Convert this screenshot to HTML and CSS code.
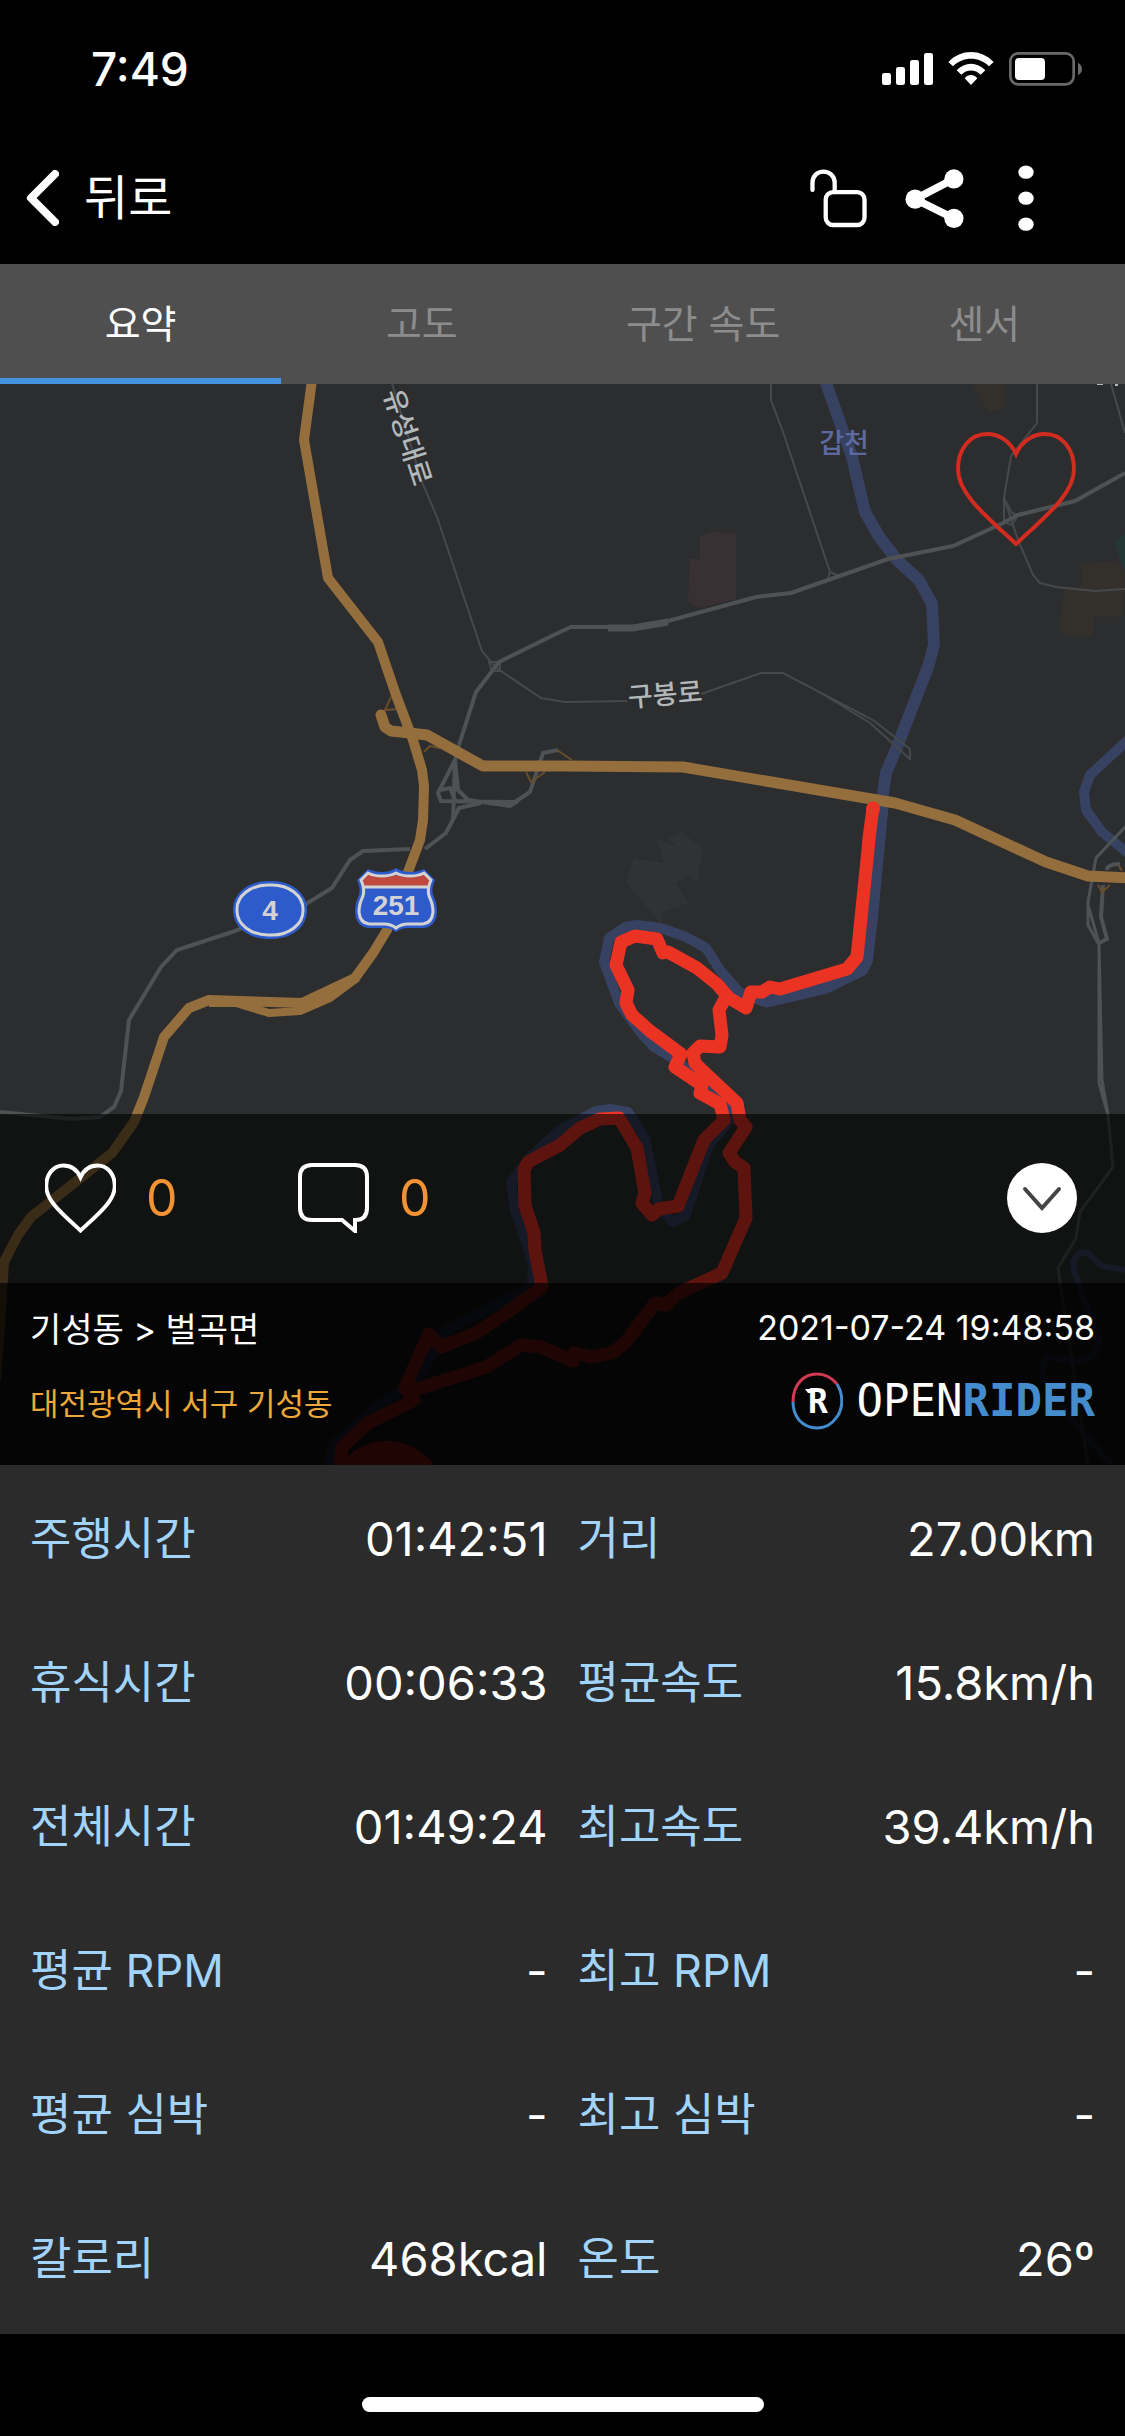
FILE: index.html
```html
<!DOCTYPE html>
<html lang="ko">
<head>
<meta charset="utf-8">
<meta name="viewport" content="width=device-width, initial-scale=1">
<title>OPENRIDER</title>
<link rel="stylesheet" href="styles.css">
</head>
<body>
<svg class="defs" width="0" height="0" aria-hidden="true">
  <symbol id="heart" viewBox="0 0 120 114">
    <path d="M60 22C54 9 43 2 31 2C14 2 2 17 2 37C2 62 30 84 60 112C90 84 118 62 118 37C118 17 106 2 89 2C77 2 66 9 60 22Z" fill="none" stroke="currentColor" vector-effect="non-scaling-stroke"/>
  </symbol>
</svg>

<div class="status">
  <span class="clock">7:49</span>
  <svg class="status-icons" viewBox="291 36 600 102" aria-label="신호, Wi-Fi, 배터리">
    <g fill="#fff">
      <rect x="291" y="99" width="27" height="36" rx="7"/>
      <rect x="333" y="81" width="27" height="54" rx="7"/>
      <rect x="375" y="60" width="27" height="75" rx="7"/>
      <rect x="417" y="39" width="27" height="96" rx="7"/>
      <path d="M490 66C528 26 588 26 626 66L612 79C582 49 534 49 504 79Z"/>
      <path d="M515 91C539 65 577 65 601 91L587 104C571 87 545 87 529 104Z"/>
      <path d="M539 115C550 102 566 102 577 115L558 135Z"/>
      <rect x="690" y="54" width="90" height="66" rx="12"/>
    </g>
    <rect x="676" y="40" width="190" height="93" rx="24" fill="none" stroke="#6a6a6a" stroke-width="8"/>
    <path d="M879 68Q891 75 891 87Q891 99 879 106Z" fill="#6a6a6a"/>
  </svg>
</div>

<header class="nav">
  <button class="back" type="button">
    <svg class="back-icon" viewBox="0 0 33 56"><path d="M29 4L5 28L29 52" fill="none" stroke="#fff" stroke-width="8" stroke-linecap="round" stroke-linejoin="round"/></svg>
    <span>뒤로</span>
  </button>
  <div class="nav-tools">
    <button type="button" aria-label="공개 설정">
      <svg class="lock" viewBox="75 388 171 178"><g fill="none" stroke="#fff" stroke-width="13"><path d="M82 451V429C82 409 97 396 115 396S149 409 149 429V456" stroke-linecap="round"/><rect x="122" y="458" width="117" height="99" rx="22"/></g></svg>
    </button>
    <button type="button" aria-label="공유">
      <svg class="share" viewBox="360 386 177 178"><path d="M507 416L390 477L507 535" fill="none" stroke="#fff" stroke-width="23"/><g fill="#fff"><circle cx="390" cy="477" r="29"/><circle cx="507" cy="416" r="29"/><circle cx="507" cy="535" r="29"/></g></svg>
    </button>
    <button type="button" aria-label="더보기">
      <svg class="more" viewBox="699 377 48 197"><g fill="#fff"><ellipse cx="723" cy="398" rx="23" ry="20"/><ellipse cx="723" cy="476" rx="23" ry="20"/><ellipse cx="723" cy="554" rx="23" ry="20"/></g></svg>
    </button>
  </div>
</header>

<nav class="tabs" role="tablist">
  <button type="button" role="tab" aria-selected="true">요약</button>
  <button type="button" role="tab" aria-selected="false">고도</button>
  <button type="button" role="tab" aria-selected="false">구간 속도</button>
  <button type="button" role="tab" aria-selected="false">센서</button>
</nav>

<section class="map">
  <svg class="map-canvas" viewBox="0 384 1125 1081" preserveAspectRatio="xMidYMin slice" role="img" aria-label="주행 경로 지도">
    <!-- land use -->
    <path fill="#383032" d="M700 537L710 532L736 533V599L700 608L688 601L690 559H700Z"/>
    <path fill="#33302c" d="M971 384H1004V408L989 412ZM1081 563L1119 561L1125 572L1121 617H1095L1093 636H1067L1059 629L1065 589L1081 587Z"/>
    <path fill="#233735" d="M1125 532L1114 543L1125 572Z"/>
    <path fill="#2f3334" d="M634 858L664 863L657 839L678 847L668 839L681 832L703 848L697 883L688 874L676 884L689 903L663 912L662 925L626 882Z"/>

    <!-- rivers -->
    <g fill="none" stroke="#374263" stroke-linejoin="round">
      <path stroke-width="12" d="M825 380L852 457L865 512L880 538L897 560L919 580L932 604L934 645L928 667L897 747L886 773L883 793L882 812L872 917L867 960L862 970L825 988L765 1002"/>
      <path stroke-width="10" d="M780 998L765 1002L740 993L720 970L706 948L686 937L661 928L637 925L625 927L609 938L604 962L619 1003L641 1033L654 1047L679 1062L704 1083L728 1103L731 1118L708 1147L686 1215L673 1222L659 1207L645 1138L628 1112L610 1109L596 1111L560 1130L530 1157L511 1182L515 1210L533 1263L532 1287L447 1330L418 1377L364 1417L335 1443L326 1467"/>
      <path stroke-width="10" d="M1130 738L1090 775L1084 792L1086 810L1102 832L1130 855"/>
      <path stroke-width="6" d="M1125 1270L1102 1266L1088 1253L1079 1253L1073 1262L1075 1273L1100 1343L1093 1357L1075 1361L1046 1357L1041 1377L1075 1423L1111 1465"/>
    </g>

    <!-- local roads -->
    <g fill="none" stroke="#46494b" stroke-width="2">
      <path d="M391 380L422 482L437 517L482 651L495 667L541 698L565 702L627 701M701 694L761 673H783L873 720L910 749V759L870 723L821 693"/>
      <path d="M489 662H500V671H492Z"/>
      <path d="M771 380V400L783 432L830 572L828 578M830 572L839 576"/>
      <path d="M1037 380V423L1011 456L1004 498L1018 540L1033 575L1040 583L1056 587L1095 591L1125 589M1004 498V522L1012 525L1018 515L1012 513L1004 498M1111 384L1125 433"/>
      <path stroke-width="3" stroke="#4e5254" d="M1125 827L1096 858L1088 902V925L1099 945V1083L1108 1115L1113 1167L1080 1212L1076 1238L1058 1268L1088 1465M1088 905L1099 943L1102 1080L1108 1115"/>
      <path stroke-width="4" stroke="#4e5254" d="M1107 870Q1107 864 1120 864M1103 885L1101 917L1107 939L1099 943"/>
    </g>
    <g fill="none" stroke="#4e5254" stroke-width="4">
      <path d="M1125 473L1075 501L1018 515L1003 523L953 546L888 559L791 593L756 597L668 621L632 627H571L560 632L499 662L476 692L459 745"/>
      <path stroke-width="7" d="M668 622L633 628H608"/>
      <path d="M459 745L455 760L438 793L441 801L515 802L530 792L543 753L558 750M455 760L458 790L468 800L510 806L518 801M455 760L453 820M440 790L450 788L455 800"/>
      <path d="M481 803L459 808L446 833L425 849M410 849L363 851L350 860L332 888L306 904L232 932L177 950L161 967L129 1020L121 1091L114 1107L100 1117L72 1119L0 1112" stroke-width="4"/>
    </g>

    <!-- ramps -->
    <path fill="none" stroke="#6a4d29" stroke-width="2" d="M391 697L385 710L398 709M424 752L430 746L440 748M526 772L531 782L545 772M557 750L572 760M1098 885L1102 892L1110 885M1119 866L1122 871" />

    <!-- motorways -->
    <g fill="none" stroke="#946e3d" stroke-linejoin="round">
      <path stroke-width="10" d="M312 380L304 440L328 578L378 642L396 695L413 740L422 770L424 786L423 820L420 840L408 872L387 930L373 953L355 978L302 1003L209 1000L189 1008L164 1037L144 1097L134 1122L112 1153L31 1217L18 1235L4 1262L1 1310L-4 1380"/>
      <path stroke-width="8" d="M357 978L330 998L300 1011L269 1013L236 1003L209 1003"/>
      <path stroke-width="11" stroke-linecap="round" d="M381 715L385 727L391 731L427 735L483 766L565 766L683 767L895 803L955 820L1046 862L1088 876L1130 878"/>
    </g>

    <!-- recorded ride -->
    <g fill="none" stroke="#ea3323" stroke-width="13" stroke-linejoin="round" stroke-linecap="round">
      <path d="M873 808L869 838L868 850L857 957L847 969L780 989L770 987L762 992H751L746 1008L729 998L717 984L697 968L668 952L663 953L657 939L635 936L621 942L616 965L628 990L626 1003L632 1015L650 1031L681 1054L675 1067L702 1085L700 1093L720 1104L724 1120L704 1140L678 1206L659 1209L652 1215L642 1203L645 1193L637 1148L619 1118L600 1119L580 1128L560 1145L528 1162L524 1170L525 1205L534 1233L535 1250L542 1287L515 1307L476 1333L441 1347L429 1334L417 1360L405 1388L414 1400L368 1423L342 1447L340 1467"/>
      <path d="M726 997L719 1010L722 1035L720 1047L700 1046L693 1053L695 1063L704 1072L737 1103L740 1120L746 1127L729 1153L735 1162L744 1168L746 1218L722 1273L679 1293L666 1305L655 1303L625 1343L612 1353L592 1357L574 1353L573 1361L541 1347L521 1345L486 1367L414 1390"/>
    </g>
    <circle cx="873" cy="809" r="7" fill="#ea3323"/>
    <circle cx="387" cy="1499" r="58" fill="#ea3323"/>

    <!-- route shields -->
    <g>
      <rect x="233" y="881" width="74" height="58" rx="34" ry="28" fill="#2d5bcb"/>
      <rect x="237" y="885" width="66" height="50" rx="31" ry="24" fill="none" stroke="#d3d3d3" stroke-width="3"/>
      <text class="shield-text" x="270" y="920">4</text>
    </g>
    <g transform="translate(396 0)">
      <path fill="#2d5bcb" d="M0 868Q6 872 14 872Q22 872 28 869L39 880Q35 888 37 895Q41 903 41 912Q40 927 27 928H12Q5 928 0 932Q-5 928 -12 928H-27Q-40 927 -41 912Q-41 903 -37 895Q-35 888 -39 880L-28 869Q-22 872 -14 872Q-6 872 0 868Z"/>
      <path fill="#c0493f" d="M0 875Q6 877 14 877Q22 877 28 874L34 880Q32 884 32 887H-32Q-32 884 -34 880L-28 874Q-22 877 -14 877Q-6 877 0 875Z"/>
      <path fill="none" stroke="#d3d3d3" stroke-width="3" d="M0 873Q6 876 14 876Q22 876 28 873L35 880Q31 889 33 896Q37 904 37 912Q36 923 27 924H12Q5 924 0 928Q-5 924 -12 924H-27Q-36 923 -37 912Q-37 904 -33 896Q-31 889 -35 880L-28 873Q-22 876 -14 876Q-6 876 0 873ZM-32 887H32"/>
      <text class="shield-text" x="0" y="915">251</text>
    </g>

    <!-- place names -->
    <text class="road-name" transform="translate(408 437) rotate(72)" y="10">유성대로</text>
    <text class="road-name" transform="translate(665 694) rotate(-5)" y="10">구봉로</text>
    <text class="river-name" x="844" y="453">갑천</text>
    <path fill="#b3b8bb" d="M1097 384h6v1h-6zM1115 384h3v2h-3z"/>
  </svg>

  <button class="favorite" type="button" aria-label="관심 코스"><svg class="favorite-icon"><use href="#heart"/></svg></button>

  <div class="panel">
    <div class="actions">
      <button class="action" type="button" aria-label="좋아요 0"><svg class="action-icon"><use href="#heart"/></svg><span>0</span></button>
      <button class="action" type="button" aria-label="댓글 0">
        <svg class="action-icon" viewBox="0 0 71 70"><path d="M14 2H57Q69 2 69 14V45Q69 57 57 57V68L44 57H14Q2 57 2 45V14Q2 2 14 2Z" fill="none" stroke="currentColor"/></svg><span>0</span>
      </button>
      <button class="collapse" type="button" aria-label="접기"><svg viewBox="0 0 70 70"><circle cx="35" cy="35" r="35" fill="#fff"/><path d="M18 26L35 45L52 26" fill="none" stroke="#444" stroke-width="4" stroke-linecap="round"/></svg></button>
    </div>
    <div class="info">
      <h1 class="course">기성동 &gt; 벌곡면</h1>
      <time class="date" datetime="2021-07-24T19:48:58">2021-07-24 19:48:58</time>
      <p class="place">대전광역시 서구 기성동</p>
      <div class="brand">
        <svg class="brand-mark" viewBox="0 0 52 58">
          <g fill="none" stroke-width="3"><path stroke="#d23b52" d="M2 30C2 11 14 2 26 2C34 2 41 6 46 12"/><path stroke="#458ccf" d="M46 12C53 23 52 38 45 46C36 59 18 59 8 48C4 43 2 37 2 30"/></g>
          <text class="brand-letter" x="27" y="41">R</text>
          <path d="M14 17H24V21H17Z" fill="#fff"/>
        </svg>
        <span class="brand-open">OPEN</span><span class="brand-rider">RIDER</span>
      </div>
    </div>
  </div>
</section>

<dl class="stats">
  <div><dt>주행시간</dt><dd>01:42:51</dd></div>
  <div><dt>거리</dt><dd>27.00km</dd></div>
  <div><dt>휴식시간</dt><dd>00:06:33</dd></div>
  <div><dt>평균속도</dt><dd>15.8km/h</dd></div>
  <div><dt>전체시간</dt><dd>01:49:24</dd></div>
  <div><dt>최고속도</dt><dd>39.4km/h</dd></div>
  <div><dt>평균 RPM</dt><dd>-</dd></div>
  <div><dt>최고 RPM</dt><dd>-</dd></div>
  <div><dt>평균 심박</dt><dd>-</dd></div>
  <div><dt>최고 심박</dt><dd>-</dd></div>
  <div><dt>칼로리</dt><dd>468kcal</dd></div>
  <div><dt>온도</dt><dd>26º</dd></div>
</dl>

<div class="home"><span class="home-bar"></span></div>
</body>
</html>
```
FILE: styles.css
```css
* { box-sizing: border-box; }

body {
  margin: 0;
  background: #000;
  color: #fff;
  font-family: Inter, "Noto Sans CJK KR", sans-serif;
}

button {
  margin: 0;
  padding: 0;
  border: 0;
  background: none;
  color: inherit;
  font: inherit;
  cursor: pointer;
}

svg { display: block; }
.defs { position: absolute; }

/* status bar */
.status {
  display: flex;
  align-items: center;
  justify-content: space-between;
  height: 132px;
  padding: 6px 43px 0 91px;
}
.clock { font-size: 46px; font-weight: 500; line-height: 48px; }
.status-icons { width: 200px; height: 34px; }

/* navigation bar */
.nav {
  display: flex;
  align-items: center;
  justify-content: space-between;
  height: 132px;
  padding: 0 91px 0 26px;
}
.back {
  display: flex;
  align-items: center;
  gap: 25px;
  font-size: 48px;
  line-height: 56px;
}
.back-icon { width: 33px; height: 56px; }
.nav-tools { display: flex; align-items: center; }
.lock { width: 57px; height: 59px; margin-right: 38px; }
.share { width: 59px; height: 59px; margin-right: 54px; }
.more { width: 16px; height: 66px; }

/* tabs */
.tabs {
  display: grid;
  grid-template-columns: repeat(4, 1fr);
  background: #4f4f4f;
}
.tabs button {
  height: 120px;
  border-bottom: 6px solid transparent;
  color: #8c8c8c;
  font-size: 39px;
}
.tabs [aria-selected="true"] {
  border-bottom-color: #4594df;
  color: #fff;
}

/* map */
.map {
  position: relative;
  overflow: hidden;
  background: #2c2d2f;
}
.map-canvas { width: 100%; aspect-ratio: 1125 / 1081; }
.shield-text {
  fill: #d3d3d3;
  font: 700 28px "Liberation Sans Narrow", "Liberation Sans", sans-serif;
  text-anchor: middle;
}
.road-name,
.river-name {
  fill: #b3b8bb;
  font: 500 27px "Noto Sans CJK KR", sans-serif;
  text-anchor: middle;
}
.river-name { fill: #5d6aa1; }

.favorite {
  position: absolute;
  top: 48px;
  right: 49px;
  color: #d22b20;
}
.favorite-icon { width: 120px; height: 114px; stroke-width: 4px; }

.panel {
  position: absolute;
  right: 0;
  bottom: 0;
  left: 0;
}
.actions {
  display: flex;
  align-items: center;
  height: 169px;
  padding: 0 48px 2px 45px;
  background: rgba(0, 0, 0, 0.6);
}
.action {
  display: flex;
  align-items: center;
  gap: 30px;
  min-width: 253px;
}
.action span { color: #f19233; font-size: 50px; line-height: 64px; }
.action-icon { width: 71px; height: 70px; stroke-width: 4px; }
.collapse { margin-left: auto; }
.collapse svg { width: 70px; height: 70px; }

.info {
  display: grid;
  grid-template-columns: 1fr auto;
  grid-auto-rows: 74px;
  align-items: center;
  padding: 7px 30px 27px;
  background: rgba(0, 0, 0, 0.87);
}
.course { margin: 0; font-size: 34px; font-weight: 400; }
.date { justify-self: end; font-size: 34px; }
.place { margin: 0; color: #eea83a; font-size: 31px; }
.brand {
  display: flex;
  align-items: center;
  justify-self: end;
  line-height: 58px;
}
.brand-mark { width: 52px; height: 58px; margin-right: 14px; }
.brand-letter {
  fill: #fff;
  font: 700 33px "DejaVu Sans Mono", monospace;
  text-anchor: middle;
}
.brand-open,
.brand-rider { font-family: "DejaVu Sans Mono", monospace; font-size: 44px; }
.brand-rider { color: #458ccf; font-weight: 700; }

/* ride figures */
.stats {
  display: grid;
  grid-template-columns: 1fr 1fr;
  grid-auto-rows: 144px;
  column-gap: 30px;
  margin: 0;
  padding: 2px 30px 3px;
  background: #2b2b2b;
}
.stats div {
  display: flex;
  align-items: center;
  justify-content: space-between;
}
.stats dt { color: #a1d3fb; font-size: 45px; line-height: 60px; }
.stats dd { margin: 0; font-size: 47px; line-height: 60px; }

/* home indicator */
.home {
  display: flex;
  justify-content: center;
  padding: 63px 0 24px;
}
.home-bar { width: 402px; height: 15px; border-radius: 8px; background: #fff; }
```
